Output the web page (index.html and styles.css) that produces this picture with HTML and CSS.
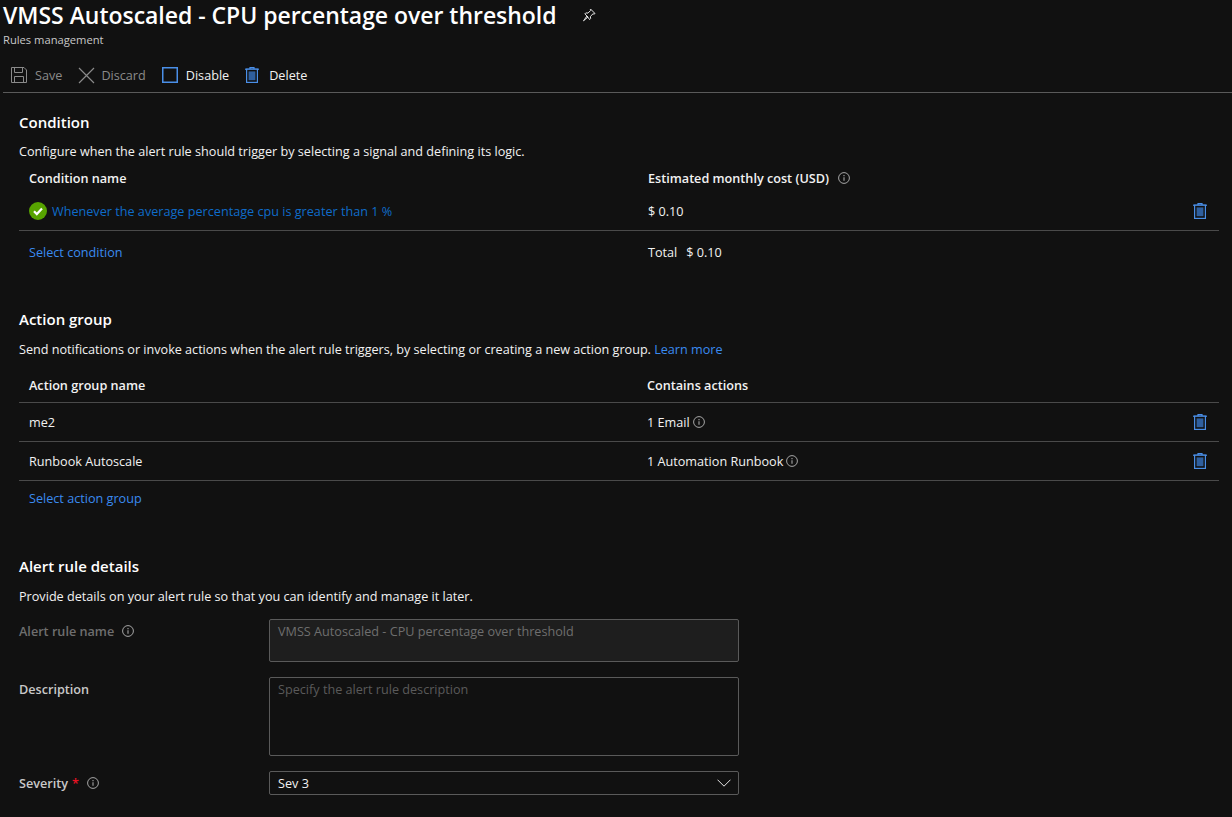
FILE: index.html
```html
<!DOCTYPE html>
<html>
<head>
  <title>Rules management</title>
  <link rel="stylesheet" href="styles.css">
</head>
<body>
  <svg class="icon-defs" width="0" height="0">
    <symbol id="trash" viewBox="0 0 14 16">
      <path d="M5 2V.7h4V2" fill="none" stroke="#4a8fe8" stroke-width="1.2"/>
      <path d="M0 2.2h14" stroke="#4a8fe8" stroke-width="1.2"/>
      <rect x="1.6" y="2.2" width="10.8" height="13.2" fill="#111" stroke="#4a8fe8" stroke-width="1.2"/>
      <rect x="3.6" y="4.4" width="6.8" height="8.8" fill="#2f5f9e"/>
    </symbol>
    <symbol id="info" viewBox="0 0 12 12">
      <circle cx="6" cy="6" r="5.4" fill="none" stroke="#a6a6a6"/>
      <path d="M6 5.2v3.6M6 3v1.2" stroke="#a6a6a6" stroke-width="1.1"/>
    </symbol>
  </svg>

  <header class="page-head">
    <div class="title-row">
      <h1>VMSS Autoscaled - CPU percentage over threshold</h1>
      <svg class="pin" width="14" height="14" viewBox="0 0 14 14"><path d="M8.5 1l4.5 4.5-1 .6-1-.3-2.6 2.6.2 2.2-1 1L5 8 1.5 12.8 6 9 2.800 5.900l1-1 2.200.2 2.600-2.600-.2-1z" fill="none" stroke="#e6e6e6"/></svg>
    </div>
    <p class="subtitle">Rules management</p>
  </header>

  <nav class="toolbar">
    <span class="tool off">
      <svg width="16" height="16" viewBox="0 0 16 16"><path d="M.5.500h12.500l2.500 2.500v12.500H.5z" fill="none" stroke="#8a8a8a"/><path d="M3.500.500v5h8v-5M3.500 15.500v-6h9v6" fill="none" stroke="#8a8a8a"/></svg>
      Save
    </span>
    <span class="tool off tool-discard">
      <svg width="17" height="17" viewBox="0 0 17 17"><path d="M1 1l15 15M16 1L1 16" stroke="#8a8a8a" stroke-width="1.200"/></svg>
      Discard
    </span>
    <span class="tool">
      <svg width="16" height="16" viewBox="0 0 16 16"><rect x=".75" y=".75" width="14.500" height="14.500" fill="none" stroke="#4a8fe8" stroke-width="1.500"/></svg>
      Disable
    </span>
    <span class="tool">
      <svg class="trash" width="14" height="16"><use href="#trash"/></svg>
      Delete
    </span>
  </nav>

  <main class="content">
    <section class="condition">
      <h2>Condition</h2>
      <p class="desc">Configure when the alert rule should trigger by selecting a signal and defining its logic.</p>
      <div class="row head-row cond-head">
        <span class="cell-name">Condition name</span>
        <span class="cell-value">Estimated monthly cost (USD) <svg class="info info-wide" width="12" height="12"><use href="#info"/></svg></span>
      </div>
      <div class="row cond-row line">
        <span class="cell-name">
          <svg class="check" width="18" height="18" viewBox="0 0 18 18"><circle cx="9" cy="9" r="9" fill="#57a300"/><path d="M5 9.300l2.800 2.800L13 6.600" fill="none" stroke="#fff" stroke-width="2.200"/></svg>
          <a class="link-dark">Whenever the average percentage cpu is greater than 1 %</a>
        </span>
        <span class="cell-value">$ 0.10</span>
        <svg class="trash row-trash" width="14" height="16"><use href="#trash"/></svg>
      </div>
      <div class="row select-row">
        <a class="cell-name link">Select condition</a>
        <span class="cell-value">Total <span class="total">$ 0.10</span></span>
      </div>
    </section>

    <section class="actions">
      <h2>Action group</h2>
      <p class="desc">Send notifications or invoke actions when the alert rule triggers, by selecting or creating a new action group. <a class="link">Learn more</a></p>
      <div class="row head-row action-head line">
        <span class="cell-name">Action group name</span>
        <span class="cell-value">Contains actions</span>
      </div>
      <div class="row action-row line">
        <span class="cell-name">me2</span>
        <span class="cell-value">1 Email <svg class="info" width="12" height="12"><use href="#info"/></svg></span>
        <svg class="trash row-trash" width="14" height="16"><use href="#trash"/></svg>
      </div>
      <div class="row action-row line">
        <span class="cell-name">Runbook Autoscale</span>
        <span class="cell-value">1 Automation Runbook <svg class="info" width="12" height="12"><use href="#info"/></svg></span>
        <svg class="trash row-trash" width="14" height="16"><use href="#trash"/></svg>
      </div>
      <div class="row select-action">
        <a class="cell-name link">Select action group</a>
      </div>
    </section>

    <section class="details">
      <h2>Alert rule details</h2>
      <p class="desc">Provide details on your alert rule so that you can identify and manage it later.</p>
      <div class="field name-field">
        <label class="muted">Alert rule name <svg class="info info-wide" width="12" height="12"><use href="#info"/></svg></label>
        <div class="box box-name">VMSS Autoscaled - CPU percentage over threshold</div>
      </div>
      <div class="field desc-field">
        <label>Description</label>
        <div class="box box-desc">Specify the alert rule description</div>
      </div>
      <div class="field sev-field">
        <label>Severity <span class="req">*</span> <svg class="info info-wide" width="12" height="12"><use href="#info"/></svg></label>
        <div class="box box-sev">
          Sev 3
          <svg width="14" height="8" viewBox="0 0 14 8"><path d="M.5.700L7 7.200 13.500.700" fill="none" stroke="#e6e6e6"/></svg>
        </div>
      </div>
    </section>
  </main>
</body>
</html>
```

FILE: styles.css
```css
html, body {
  height: 100%;
}

body {
  margin: 0;
  overflow: hidden;
  background-color: #111;
  color: #f2f2f2;
  font-family: "Open Sans", "Noto Sans", sans-serif;
  font-size: 12.650px;
}

.icon-defs {
  display: block;
  height: 0;
}

h1, h2, p {
  margin: 0;
}

/* Page header */
.page-head {
  padding-left: 3px;
}

.title-row {
  display: flex;
  align-items: center;
  height: 29px;
}

h1 {
  font-size: 23px;
  font-weight: 600;
  color: #fff;
  letter-spacing: -0.030px;
  white-space: nowrap;
}

.pin {
  margin-left: 25px;
}

.subtitle {
  height: 24px;
  padding-top: 2px;
  box-sizing: border-box;
  font-size: 11.200px;
  line-height: 18px;
  color: #c8c8c8;
}

/* Toolbar */
.toolbar {
  display: flex;
  align-items: center;
  height: 40px;
  margin-left: 3px;
  padding-top: 5px;
  padding-left: 8px;
  border-bottom: 1px solid #5a5a5a;
  box-sizing: border-box;
}

.tool {
  display: flex;
  align-items: center;
  gap: 8px;
  margin-right: 16px;
  color: #f2f2f2;
}

.tool.off {
  color: #8a8a8a;
}

.tool-discard {
  gap: 6px;
}

.tool .trash {
  margin-right: 2px;
}

/* Sections */
.content {
  padding: 0 13px 0 19px;
}

h2 {
  font-size: 15px;
  font-weight: 600;
  line-height: 18px;
  color: #fff;
}

.desc {
  line-height: 18px;
  color: #f2f2f2;
}

.condition {
  padding-top: 20px;
}

.condition .desc {
  margin-top: 11px;
}

.actions {
  margin-top: 37px;
}

.actions .desc {
  margin-top: 12px;
  letter-spacing: -0.020px;
}

.details {
  margin-top: 42px;
}

.details .desc {
  margin-top: 12px;
}

/* Rule tables */
.row {
  display: grid;
  grid-template-columns: 619px 1fr 14px;
  align-items: center;
  padding-left: 10px;
  padding-right: 12px;
  box-sizing: border-box;
}

.actions .row {
  grid-template-columns: 618px 1fr 14px;
}

.line {
  border-bottom: 1px solid #4a4a4a;
}

.head-row {
  font-weight: 600;
}

.cond-head {
  height: 34px;
  margin-top: 1px;
}

.cond-row {
  height: 36px;
  padding-bottom: 3px;
}

.select-row {
  height: 42px;
}

.action-head {
  height: 35px;
  margin-top: 10px;
}

.action-row {
  height: 39px;
}

.select-action {
  height: 34px;
}

.cell-name {
  display: flex;
  align-items: center;
  gap: 5px;
}

.cell-value {
  display: flex;
  align-items: center;
  gap: 3px;
}

.row-trash {
  grid-column: 3;
}

.check {
  flex: none;
}

.info-wide {
  margin-left: 6px;
}

.total {
  margin-left: 6px;
}

.link {
  color: #3a8bf0;
}

.link-dark {
  color: #0f6cc9;
}

/* Form */
.field {
  display: grid;
  grid-template-columns: 250px 470px;
}

.field label {
  display: flex;
  align-items: center;
  align-self: start;
  gap: 4px;
  height: 24px;
  font-weight: 600;
  color: #c8c8c8;
}

.field label.muted {
  color: #6e6e6e;
}

.field label .info-wide {
  margin-left: 4px;
}

.box {
  padding: 3px 8px;
  border: 1px solid #5a5a5a;
  border-radius: 2px;
  box-sizing: border-box;
  line-height: 16px;
  color: #5a5a5a;
}

.name-field {
  margin-top: 14px;
}

.box-name {
  height: 43px;
  background-color: #1e1e1e;
  color: #6e6e6e;
}

.desc-field {
  margin-top: 15px;
}

.box-desc {
  height: 79px;
}

.sev-field {
  margin-top: 15px;
}

.box-sev {
  display: flex;
  align-items: center;
  justify-content: space-between;
  height: 24px;
  padding-right: 7px;
  color: #f2f2f2;
}

.req {
  color: #e81123;
  font-weight: 600;
}
```
